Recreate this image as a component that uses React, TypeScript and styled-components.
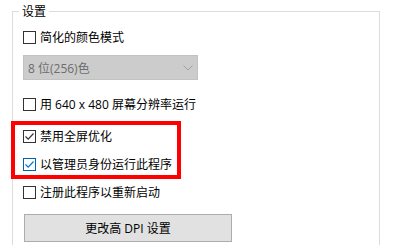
import React from 'react'
import styled, {createGlobalStyle} from 'styled-components'

const GlobalStyle = createGlobalStyle`
  html, body {
    margin: 0;
    padding: 0;
    background: #fff;
  }
  body {
    font-family: "Open Sans", "Noto Sans CJK SC", "Microsoft YaHei", sans-serif;
    font-size: 12px;
    color: #000;
  }
`

const Page = styled.div`
  width: 398px;
  height: 245px;
  overflow: hidden;
  padding: 11px 0 0 12px;
  box-sizing: border-box;
`

const Group = styled.div`
  position: relative;
  width: 368px;
  height: 250px;
  box-sizing: border-box;
  border: 1px solid #dcdcdc;
  border-bottom: none;
  padding: 16px 0 0 10px;
  display: flex;
  flex-direction: column;
  align-items: flex-start;
`

const Legend = styled.span`
  position: absolute;
  top: -8px;
  left: 6px;
  padding: 0 3px;
  background: #fff;
  line-height: 16px;
`

const Row = styled.label<{$gap: number}>`
  display: flex;
  align-items: center;
  gap: 4px;
  height: 19px;
  margin-top: ${(p) => p.$gap}px;
  line-height: 19px;
  white-space: nowrap;
`

const Box = styled.span<{$accent?: boolean}>`
  width: 13px;
  height: 13px;
  box-sizing: border-box;
  border: 1px solid ${(p) => (p.$accent ? '#0063b1' : '#333')};
  background: #fff;
  display: flex;
  align-items: center;
  justify-content: center;
  flex: none;
`

const Select = styled.div`
  margin-top: 8px;
  width: 175px;
  height: 25px;
  box-sizing: border-box;
  background: #cccccc;
  border: 1px solid #c2c2c2;
  color: #6d6d6d;
  display: flex;
  align-items: center;
  justify-content: space-between;
  padding: 0 4px 0 4px;
`

const Button = styled.div`
  margin-top: 12px;
  margin-left: 1px;
  width: 208px;
  height: 28px;
  box-sizing: border-box;
  background: #e1e1e1;
  border: 1px solid #adadad;
  display: flex;
  align-items: center;
  justify-content: center;
`

const Highlight = styled.div`
  position: absolute;
  left: -2px;
  top: 109px;
  width: 170px;
  height: 58px;
  box-sizing: border-box;
  border: 4px solid #ff0000;
  pointer-events: none;
`

const Check = ({color}: {color: string}) => (
  <svg width='11' height='11' viewBox='0 0 11 11'>
    <path d='M1.5 5.5 L4.2 8.2 L9.5 2.5' fill='none' stroke={color} strokeWidth='1.2' />
  </svg>
)

type ItemProps = {
  label: string
  gap: number
  checked?: boolean
  accent?: boolean
}

const Item = ({label, gap, checked, accent}: ItemProps) => (
  <Row $gap={gap}>
    <Box $accent={accent}>{checked && <Check color={accent ? '#0078d7' : '#333'} />}</Box>
    <span>{label}</span>
  </Row>
)

const App = () => (
  <Page>
    <GlobalStyle />
    <Group>
      <Legend>设置</Legend>
      <Item label='简化的颜色模式' gap={0} />
      <Select>
        <span>8 位(256)色</span>
        <svg width='10' height='6' viewBox='0 0 10 6'>
          <path d='M0.5 0.5 L5 5 L9.5 0.5' fill='none' stroke='#a0a0a0' strokeWidth='1' />
        </svg>
      </Select>
      <Item label='用 640 x 480 屏幕分辨率运行' gap={15} />
      <Item label='禁用全屏优化' gap={13} checked />
      <Item label='以管理员身份运行此程序' gap={9} checked accent />
      <Item label='注册此程序以重新启动' gap={9} />
      <Button>更改高 DPI 设置</Button>
      <Highlight />
    </Group>
  </Page>
)

export default App
